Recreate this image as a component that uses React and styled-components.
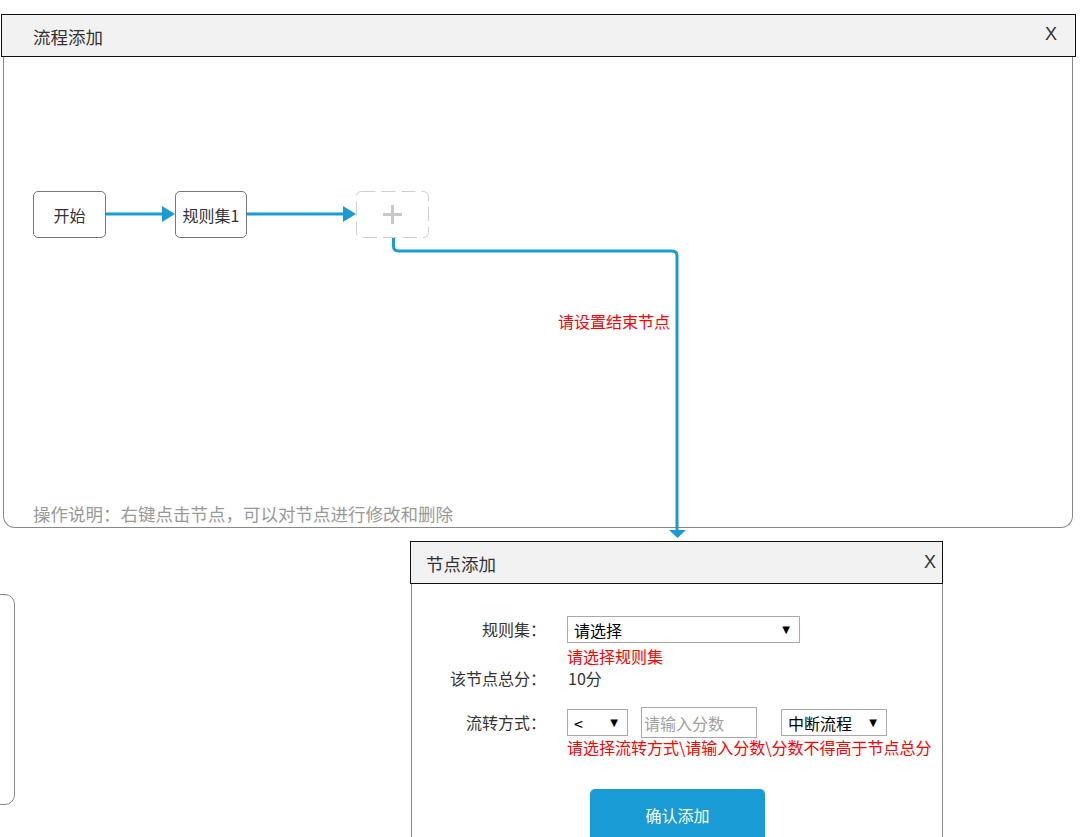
import React from "react";
import styled, { createGlobalStyle } from "styled-components";

const GlobalStyle = createGlobalStyle`
  html, body { margin: 0; padding: 0; background: #fff; }
  body {
    font-family: "Noto Sans CJK SC", "Noto Sans", "Liberation Sans", sans-serif;
    color: #333;
  }
  * { box-sizing: border-box; }
`;

const Page = styled.div`
  width: 1080px;
  height: 837px;
  overflow: hidden;
  padding-top: 14px;
`;

const FlowDialog = styled.section`
  margin-left: 1px;
  width: 1075px;
`;

const DialogHeader = styled.header`
  height: 43px;
  border: 1px solid #111;
  background: #f2f2f2;
  display: flex;
  align-items: center;
  justify-content: space-between;
  padding: 0 ${(p) => p.$padRight}px 0 ${(p) => p.$padLeft}px;
`;

const Title = styled.h2`
  margin: 0;
  font-weight: normal;
  font-size: ${(p) => p.$size}px;
  line-height: 24px;
  color: #333;
  margin-top: 2px;
`;

const Close = styled.span`
  font-family: "Liberation Sans", sans-serif;
  font-size: 18px;
  line-height: 20px;
  color: #333;
  margin-top: ${(p) => p.$offset || 0}px;
`;

const FlowBody = styled.div`
  margin: 0 3px 0 2px;
  height: 471px;
  border: 1px solid #888;
  border-top: none;
  border-radius: 0 0 12px 12px;
  display: flex;
  flex-direction: column;
`;

const Canvas = styled.div`
  flex: 1;
  position: relative;
`;

const Connectors = styled.svg`
  position: absolute;
  left: -4px;
  top: -57px;
  width: 1080px;
  height: 600px;
  overflow: visible;
  pointer-events: none;
  z-index: 2;
`;

const Node = styled.div`
  position: absolute;
  top: 134px;
  left: ${(p) => p.$x}px;
  width: ${(p) => p.$w}px;
  height: 47px;
  border: 1px solid #777;
  border-radius: 5px;
  background: #fff;
  display: flex;
  align-items: center;
  justify-content: center;
  font-size: 16px;
  color: #333;
  z-index: 1;
`;

const AddNode = styled.div`
  position: absolute;
  top: 134px;
  left: ${(p) => p.$x}px;
  width: 73px;
  height: 47px;
  z-index: 1;
`;

const EndHint = styled.span`
  position: absolute;
  left: 554px;
  top: 252px;
  font-size: 16px;
  line-height: 24px;
  color: #ff0000;
  z-index: 3;
`;

const Hint = styled.p`
  margin: 0;
  padding: 0 0 1px 29px;
  font-size: 17.5px;
  line-height: 24px;
  color: #999;
`;

const LowerRow = styled.div`
  display: flex;
  align-items: flex-start;
`;

const SidePanel = styled.div`
  margin-left: -20px;
  margin-top: 66px;
  width: 35px;
  height: 211px;
  border: 1px solid #888;
  border-radius: 10px;
  flex: none;
`;

const NodeDialog = styled.section`
  margin-left: 395px;
  margin-top: 13px;
  width: 533px;
  flex: none;
`;

const NodeBody = styled.div`
  margin-left: 1px;
  height: 260px;
  border-left: 1px solid #888;
  border-right: 1px solid #888;
  padding-top: 32px;
`;

const Field = styled.div`
  display: grid;
  grid-template-columns: 134px 1fr;
  column-gap: 21px;
  align-items: start;
  margin-top: ${(p) => p.$top || 0}px;
`;

const Label = styled.label`
  text-align: right;
  font-size: 16px;
  line-height: ${(p) => p.$lh}px;
  color: #333;
  white-space: nowrap;
`;

const ControlRow = styled.div`
  display: flex;
  align-items: center;
`;

const Select = styled.div`
  width: ${(p) => p.$w}px;
  height: 27px;
  margin-left: ${(p) => p.$ml || 0}px;
  border: 1px solid #a9a9a9;
  background: #fff;
  display: flex;
  align-items: center;
  justify-content: space-between;
  padding: 0 9px 0 6px;
  font-size: 16px;
  color: #000;
  flex: none;
`;

const Caret = styled.span`
  font-family: "DejaVu Sans", sans-serif;
  font-size: 10px;
  color: #000;
`;

const ScoreInput = styled.input`
  width: 116px;
  height: 31px;
  margin-left: 13px;
  border: 1px solid #a9a9a9;
  padding: 0 2px;
  font-family: inherit;
  font-size: 16px;
  color: #000;
  outline: none;
  &::placeholder { color: #a0a0a0; }
`;

const Value = styled.span`
  font-size: 16px;
  line-height: 20px;
  color: #333;
  padding-left: 1px;
`;

const ErrorText = styled.div`
  font-size: 16px;
  line-height: 20px;
  color: #ff0000;
  margin-top: ${(p) => p.$top || 0}px;
  white-space: nowrap;
`;

const SubmitButton = styled.button`
  display: block;
  margin: 32px 0 0 178px;
  width: 175px;
  height: 52px;
  border: none;
  border-radius: 5px;
  background: #199bd6;
  color: #fff;
  font-family: inherit;
  font-size: 16px;
`;

const BLUE = "#1a9bd4";

export default function App() {
  return (
    <>
      <GlobalStyle />
      <Page>
        <FlowDialog>
          <DialogHeader $padLeft={31} $padRight={18}>
            <Title $size={17.5}>流程添加</Title>
            <Close $offset={-3}>X</Close>
          </DialogHeader>
          <FlowBody>
            <Canvas>
              <Node $x={29} $w={73}>开始</Node>
              <Node $x={171} $w={72}>规则集1</Node>
              <AddNode $x={352}>
                <svg width="73" height="47" viewBox="0 0 73 47">
                  <rect x="0.5" y="0.5" width="72" height="46" rx="5" fill="#fff" stroke="#cfcfcf" strokeDasharray="14 6" />
                  <path d="M36.5 14 V33 M27 23.5 H46" stroke="#c8c8c8" strokeWidth="3" fill="none" />
                </svg>
              </AddNode>
              <Connectors viewBox="0 0 1080 600">
                <line x1="106" y1="214" x2="164" y2="214" stroke={BLUE} strokeWidth="3" />
                <polygon points="162,206 175,214 162,222" fill={BLUE} />
                <line x1="247" y1="214" x2="345" y2="214" stroke={BLUE} strokeWidth="3" />
                <polygon points="343,206 356,214 343,222" fill={BLUE} />
                <path
                  d="M393.5 238 V246 Q393.5 251 398.5 251 H672 Q677 251 677 256 V531"
                  stroke={BLUE}
                  strokeWidth="3"
                  fill="none"
                />
                <polygon points="669,530 686,530 677.5,538" fill={BLUE} />
              </Connectors>
              <EndHint>请设置结束节点</EndHint>
            </Canvas>
            <Hint>操作说明：右键点击节点，可以对节点进行修改和删除</Hint>
          </FlowBody>
        </FlowDialog>
        <LowerRow>
          <SidePanel />
          <NodeDialog>
            <DialogHeader $padLeft={15} $padRight={6}>
              <Title $size={17.5}>节点添加</Title>
              <Close $offset={-2}>X</Close>
            </DialogHeader>
            <NodeBody>
              <Field>
                <Label $lh={27}>规则集：</Label>
                <div>
                  <Select $w={233}>
                    <span>请选择</span>
                    <Caret>▼</Caret>
                  </Select>
                  <ErrorText $top={3}>请选择规则集</ErrorText>
                </div>
              </Field>
              <Field $top={2}>
                <Label $lh={20}>该节点总分：</Label>
                <Value>10分</Value>
              </Field>
              <Field $top={19}>
                <Label $lh={31}>流转方式：</Label>
                <div>
                  <ControlRow>
                    <Select $w={61}>
                      <span>&lt;</span>
                      <Caret>▼</Caret>
                    </Select>
                    <ScoreInput placeholder="请输入分数" />
                    <Select $w={106} $ml={24}>
                      <span>中断流程</span>
                      <Caret>▼</Caret>
                    </Select>
                  </ControlRow>
                  <ErrorText $top={-1}>请选择流转方式\请输入分数\分数不得高于节点总分</ErrorText>
                </div>
              </Field>
              <SubmitButton>确认添加</SubmitButton>
            </NodeBody>
          </NodeDialog>
        </LowerRow>
      </Page>
    </>
  );
}
